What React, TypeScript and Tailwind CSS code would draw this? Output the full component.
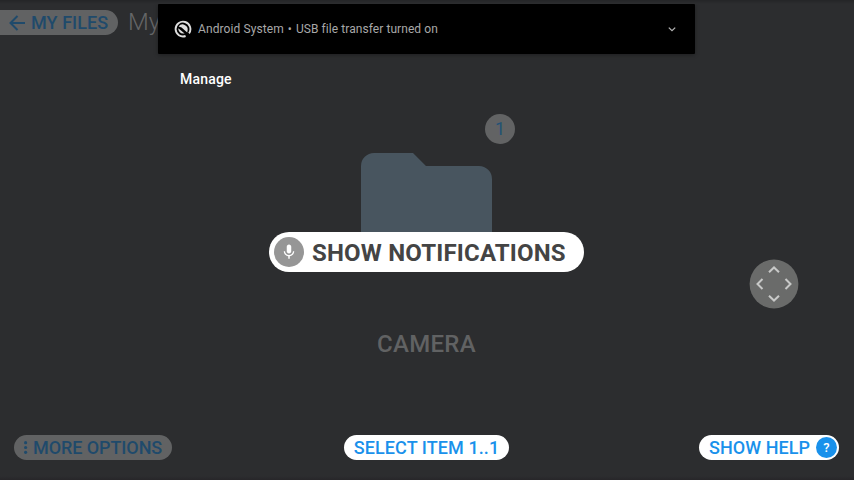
import React from "react";

function Header() {
  return (
    <header className="flex h-[46px] items-start pt-[10px]">
      <button className="flex h-[25px] w-[118px] items-center rounded-r-full bg-[#616263] pl-[9px] text-[#1f4a6b]">
        <svg width="17" height="16" viewBox="0 0 17 16" fill="none" stroke="currentColor" strokeWidth="2">
          <path d="M16 8H2M8.5 1L1.5 8l7 7" />
        </svg>
        <span className="ml-[5px] text-[18px] leading-[25px] font-medium tracking-[0.06px]">MY FILES</span>
      </button>
      <h1 className="ml-[10px] text-[24px] leading-[25px] font-light text-[#656667]">My</h1>
    </header>
  );
}

function Notification() {
  return (
    <div className="absolute top-1 left-[158px] w-[537px]">
      <div className="flex h-[50px] items-center rounded-[1px] bg-black pr-[18px] pl-[16px] text-[12px] text-[#a8a8a8] shadow-[0_1px_4px_rgba(0,0,0,0.35)]">
        <svg width="18" height="18" viewBox="0 0 18 18" fill="none" stroke="#dedede">
          <path d="M11.6 16A7.4 7.4 0 1 1 15 13.4" strokeWidth="1.9" />
          <path d="M4.6 6.6A5 5 0 0 1 13.6 10.4L13.2 12.6 7.6 7.4Z" fill="#dedede" stroke="none" />
          <path d="M4.3 8.2A4.8 4.8 0 0 0 9.4 13.6L10.6 13.4Z" fill="#dedede" stroke="none" />
        </svg>
        <span className="ml-[6px] tracking-[0.1px]">Android System</span>
        <span className="w-[12px] text-center">•</span>
        <span className="tracking-[0.07px]">USB file transfer turned on</span>
        <svg className="ml-auto" width="10" height="8" viewBox="0 0 10 8" fill="none" stroke="#b4b4b4" strokeWidth="1.3">
          <path d="M1.8 2.6L5 5.6l3.2-3" />
        </svg>
      </div>
      <div className="mt-[15px] ml-[22px] text-[14px] leading-5 font-medium tracking-[0.2px] text-white">Manage</div>
    </div>
  );
}

function FolderItem() {
  return (
    <main className="flex flex-1 flex-col items-center pt-[68px]">
      <div className="ml-[146px] flex size-[30px] items-center justify-center rounded-full bg-[#626364] text-[18px] leading-[30px] text-[#235274]">
        1
      </div>
      <svg className="mt-[9px] mr-[1px]" width="131" height="105" viewBox="0 0 131 105" fill="#48555f">
        <path d="M13 0H52L65 13H118A13 13 0 0 1 131 26V92A13 13 0 0 1 118 105H13A13 13 0 0 1 0 92V13A13 13 0 0 1 13 0Z" />
      </svg>
      <div className="mt-[72px] mr-[1px] text-[24px] leading-7 font-medium tracking-[0.3px] text-[#616263]">CAMERA</div>
    </main>
  );
}

function VoiceCommand() {
  return (
    <div className="absolute top-[232px] left-[269px] flex h-10 w-[315px] items-center rounded-full bg-white pl-[5px]">
      <span className="flex size-[30px] items-center justify-center rounded-full bg-[#969696]">
        <svg width="18" height="18" viewBox="0 0 24 24" fill="white">
          <path d="M12 14c1.66 0 2.99-1.34 2.99-3L15 5c0-1.66-1.34-3-3-3S9 3.34 9 5v6c0 1.66 1.34 3 3 3zm5.3-3c0 3-2.54 5.1-5.3 5.1S6.7 14 6.7 11H5c0 3.41 2.72 6.23 6 6.72V21h2v-3.28c3.28-.48 6-3.3 6-6.72h-1.7z" />
        </svg>
      </span>
      <span className="ml-2 pt-[2px] text-[24px] leading-[38px] font-bold tracking-[0.18px] whitespace-nowrap text-[#444444]">
        SHOW NOTIFICATIONS
      </span>
    </div>
  );
}

function Joystick() {
  return (
    <svg className="absolute top-[259px] left-[749px]" width="50" height="50" viewBox="0 0 50 50" fill="none">
      <circle cx="25" cy="25" r="24.4" fill="#6a6b6a" />
      <path
        d="M20 13.3l5-4.8 5 4.8M20 36.7l5 4.8 5-4.8M13.5 20l-5 5 5 5M36.5 20l5 5-5 5"
        stroke="#c8c9c8"
        strokeWidth="2"
      />
    </svg>
  );
}

function Footer() {
  return (
    <footer className="flex h-[45px] items-start justify-between pr-[15px] pl-[14px] text-[18px] leading-[25px] font-medium whitespace-nowrap">
      <button className="flex h-[25px] w-[158px] items-center rounded-full bg-[#616263] pl-[10px] text-[#1f4a6b]">
        <svg width="4" height="13" viewBox="0 0 4 13" fill="currentColor">
          <circle cx="1.6" cy="1.7" r="1.6" />
          <circle cx="1.6" cy="6.5" r="1.6" />
          <circle cx="1.6" cy="11.3" r="1.6" />
        </svg>
        <span className="ml-[5px] tracking-[-0.08px]">MORE OPTIONS</span>
      </button>
      <button className="ml-[17px] h-[25px] w-[165px] rounded-full bg-white tracking-[0.08px] text-[#1991eb]">
        SELECT ITEM 1..1
      </button>
      <button className="ml-[35px] flex h-[25px] w-[140px] items-center justify-between rounded-full bg-white pr-[2px] pl-[10px] text-[#1991eb]">
        <span className="tracking-[0.05px]">SHOW HELP</span>
        <span className="flex size-[21px] items-center justify-center rounded-full bg-[#1991eb] text-[13px] text-white">?</span>
      </button>
    </footer>
  );
}

export default function App() {
  return (
    <div className="relative flex h-[480px] w-[854px] flex-col overflow-hidden bg-[#2c2d2f] font-['Roboto',sans-serif]">
      <Header />
      <FolderItem />
      <Footer />
      <Notification />
      <VoiceCommand />
      <Joystick />
      <div className="absolute inset-x-0 top-0 h-1 bg-linear-to-b from-[#242527] to-[#2c2d2f]" />
      <div className="absolute inset-x-0 bottom-0 h-1 bg-linear-to-b from-[#2c2d2f] to-[#272629]" />
    </div>
  );
}
